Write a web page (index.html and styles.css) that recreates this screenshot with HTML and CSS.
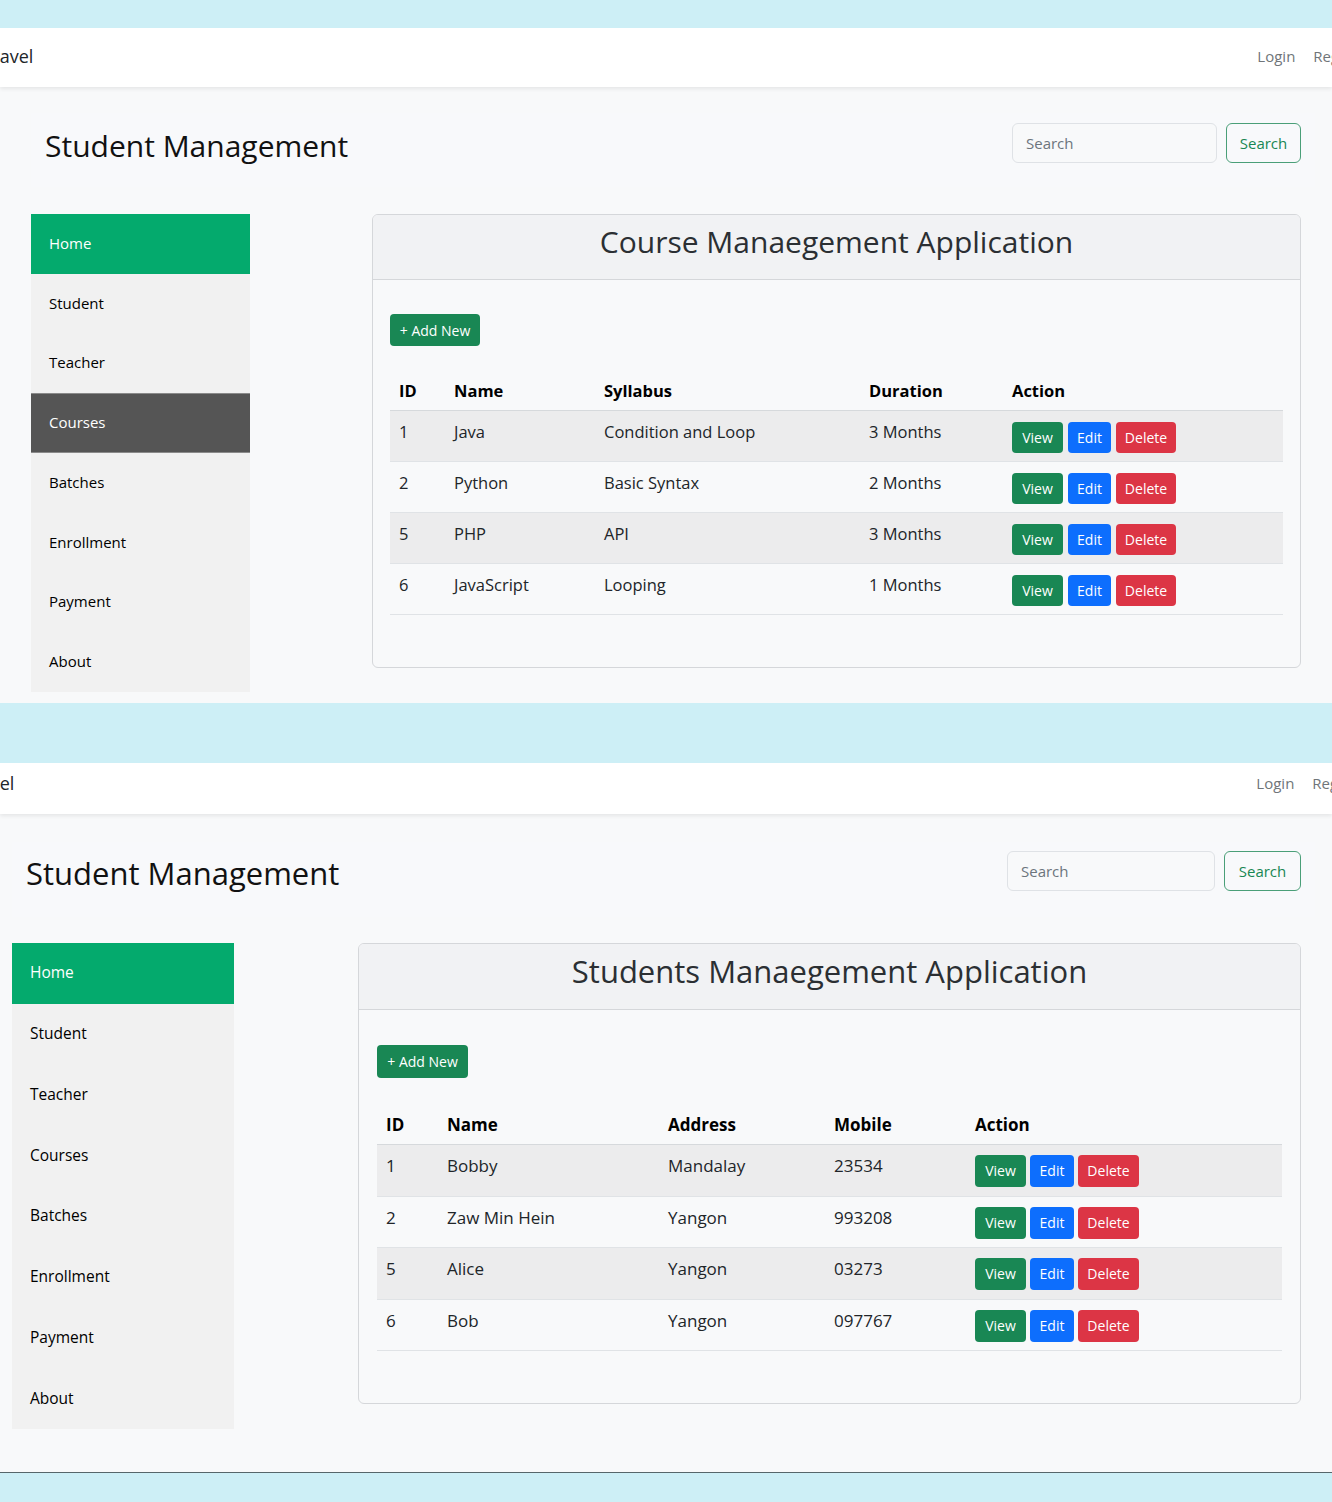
FILE: index.html
```html
<!DOCTYPE html>
<html lang="en">
<head>
<meta charset="utf-8">
<title>Student Management</title>
<link rel="stylesheet" href="styles.css">
</head>
<body>
<div class="gap gap-top"></div>

<section class="shot shot-a">
  <nav class="navbar">
    <span class="brand">Laravel</span>
    <div class="nav-links"><a href="#">Login</a><a href="#">Register</a></div>
  </nav>
  <div class="content">
    <header class="page-head">
      <h1 class="app-title">Student Management</h1>
      <form class="search">
        <input class="search-input" type="text" placeholder="Search">
        <button class="btn-outline" type="button">Search</button>
      </form>
    </header>
    <div class="main">
      <aside class="sidebar">
        <a class="side-link is-green" href="#">Home</a>
        <a class="side-link" href="#">Student</a>
        <a class="side-link" href="#">Teacher</a>
        <a class="side-link is-dark" href="#">Courses</a>
        <a class="side-link" href="#">Batches</a>
        <a class="side-link" href="#">Enrollment</a>
        <a class="side-link" href="#">Payment</a>
        <a class="side-link" href="#">About</a>
      </aside>
      <div class="card">
        <div class="card-header"><h2>Course Manaegement Application</h2></div>
        <div class="card-body">
          <a class="btn btn-success btn-add" href="#">+ Add New</a>
          <table class="table">
            <colgroup>
              <col class="c-a1"><col class="c-a2"><col class="c-a3"><col class="c-a4"><col>
            </colgroup>
            <thead>
              <tr><th>ID</th><th>Name</th><th>Syllabus</th><th>Duration</th><th>Action</th></tr>
            </thead>
            <tbody>
              <tr class="striped"><td>1</td><td>Java</td><td>Condition and Loop</td><td>3 Months</td><td><div class="actions"><a class="btn btn-success">View</a><a class="btn btn-primary">Edit</a><a class="btn btn-danger">Delete</a></div></td></tr>
              <tr><td>2</td><td>Python</td><td>Basic Syntax</td><td>2 Months</td><td><div class="actions"><a class="btn btn-success">View</a><a class="btn btn-primary">Edit</a><a class="btn btn-danger">Delete</a></div></td></tr>
              <tr class="striped"><td>5</td><td>PHP</td><td>API</td><td>3 Months</td><td><div class="actions"><a class="btn btn-success">View</a><a class="btn btn-primary">Edit</a><a class="btn btn-danger">Delete</a></div></td></tr>
              <tr><td>6</td><td>JavaScript</td><td>Looping</td><td>1 Months</td><td><div class="actions"><a class="btn btn-success">View</a><a class="btn btn-primary">Edit</a><a class="btn btn-danger">Delete</a></div></td></tr>
            </tbody>
          </table>
        </div>
      </div>
    </div>
  </div>
</section>

<div class="gap gap-mid"></div>

<section class="shot shot-b">
  <nav class="navbar">
    <span class="brand">Laravel</span>
    <div class="nav-links"><a href="#">Login</a><a href="#">Register</a></div>
  </nav>
  <div class="content">
    <header class="page-head">
      <h1 class="app-title">Student Management</h1>
      <form class="search">
        <input class="search-input" type="text" placeholder="Search">
        <button class="btn-outline" type="button">Search</button>
      </form>
    </header>
    <div class="main">
      <aside class="sidebar">
        <a class="side-link is-green" href="#">Home</a>
        <a class="side-link" href="#">Student</a>
        <a class="side-link" href="#">Teacher</a>
        <a class="side-link" href="#">Courses</a>
        <a class="side-link" href="#">Batches</a>
        <a class="side-link" href="#">Enrollment</a>
        <a class="side-link" href="#">Payment</a>
        <a class="side-link" href="#">About</a>
      </aside>
      <div class="card">
        <div class="card-header"><h2>Students Manaegement Application</h2></div>
        <div class="card-body">
          <a class="btn btn-success btn-add" href="#">+ Add New</a>
          <table class="table">
            <colgroup>
              <col class="c-b1"><col class="c-b2"><col class="c-b3"><col class="c-b4"><col>
            </colgroup>
            <thead>
              <tr><th>ID</th><th>Name</th><th>Address</th><th>Mobile</th><th>Action</th></tr>
            </thead>
            <tbody>
              <tr class="striped"><td>1</td><td>Bobby</td><td>Mandalay</td><td>23534</td><td><div class="actions"><a class="btn btn-success">View</a><a class="btn btn-primary">Edit</a><a class="btn btn-danger">Delete</a></div></td></tr>
              <tr><td>2</td><td>Zaw Min Hein</td><td>Yangon</td><td>993208</td><td><div class="actions"><a class="btn btn-success">View</a><a class="btn btn-primary">Edit</a><a class="btn btn-danger">Delete</a></div></td></tr>
              <tr class="striped"><td>5</td><td>Alice</td><td>Yangon</td><td>03273</td><td><div class="actions"><a class="btn btn-success">View</a><a class="btn btn-primary">Edit</a><a class="btn btn-danger">Delete</a></div></td></tr>
              <tr><td>6</td><td>Bob</td><td>Yangon</td><td>097767</td><td><div class="actions"><a class="btn btn-success">View</a><a class="btn btn-primary">Edit</a><a class="btn btn-danger">Delete</a></div></td></tr>
            </tbody>
          </table>
        </div>
      </div>
    </div>
  </div>
</section>

<div class="gap gap-bottom"></div>
</body>
</html>
```

FILE: styles.css
```css
* { box-sizing: border-box; }

html, body {
  margin: 0;
  padding: 0;
  width: 1332px;
  height: 1502px;
  overflow: hidden;
  background: #cdeff6;
  font-family: "Open Sans", "Noto Sans", "Liberation Sans", sans-serif;
  color: #212529;
}

a { text-decoration: none; color: inherit; }

.gap { background: #cdeff6; }
.gap-top { height: 28px; }
.gap-mid { height: 60px; }
.gap-bottom { height: 29px; }

.shot {
  background: #f8f9fa;
  overflow: hidden;
}

/* navbar */
.navbar {
  height: 59px;
  padding-bottom: 4px;
  background: #fff;
  display: flex;
  align-items: center;
  justify-content: space-between;
  box-shadow: 0 2px 4px rgba(0, 0, 0, 0.08);
  position: relative;
  z-index: 1;
}

.brand {
  font-size: 18px;
  color: #212529;
  margin-left: -27px;
}

.nav-links {
  display: flex;
  gap: 18px;
  margin-right: -38px;
  font-size: 15px;
  color: #707579;
}

.shot-b .navbar { height: 51px; padding-bottom: 12px; }
.shot-b .brand { margin-left: -46px; }
.shot-b .nav-links { margin-right: -37px; }

/* content */
.content { padding-bottom: 11px; }
.shot-b .content { padding-bottom: 43px; border-bottom: 1px solid #56666a; }

.page-head {
  margin: 26px 17px 0 31px;
  height: 74px;
  padding: 0 14px;
  display: flex;
  align-items: center;
  justify-content: space-between;
  background: #f8f9fb;
}

.shot-b .page-head {
  margin: 28px 17px 0 12px;
  height: 75px;
}

.app-title {
  margin: 0;
  font-weight: 400;
  font-size: 30px;
  color: #111;
  padding-bottom: 10px;
}

.shot-b .app-title { font-size: 31px; padding-bottom: 14px; }

.search {
  display: flex;
  gap: 9px;
  margin: 0;
  padding-bottom: 14px;
}

.search-input {
  width: 205px;
  height: 40px;
  border: 1px solid #dfe2e6;
  border-radius: 6px;
  background: #f8f9fa;
  padding: 0 13px;
  font-family: inherit;
  font-size: 15px;
  color: #212529;
}

.search-input::placeholder { color: #6c757d; }

.btn-outline {
  height: 40px;
  width: 75px;
  border: 1px solid #4a9f78;
  border-radius: 6px;
  background: transparent;
  color: #198754;
  font-family: inherit;
  font-size: 15px;
  padding: 0;
}

.shot-b .search-input { width: 208px; }
.shot-b .btn-outline { width: 77px; }
.shot-b .search { padding-bottom: 17px; }

/* main row */
.main {
  display: flex;
  align-items: flex-start;
  margin-top: 27px;
  padding-left: 31px;
}

.shot-b .main {
  margin-top: 26px;
  padding-left: 12px;
}

.sidebar {
  width: 219px;
  background: #f1f1f1;
  display: flex;
  flex-direction: column;
}

.shot-b .sidebar { width: 222px; }

.side-link {
  height: 59.75px;
  display: flex;
  align-items: center;
  padding: 0 18px 2px;
  font-size: 15px;
  color: #000;
}

.shot-b .side-link { height: 60.75px; font-size: 15.5px; }

.side-link.is-green { background: #04aa6d; color: #fff; }
.side-link.is-dark {
  background: #555;
  color: #fff;
  border-top: 1px solid #8a8a8a;
  border-bottom: 1px solid #8a8a8a;
}

/* card */
.card {
  margin-left: 122px;
  width: 929px;
  border: 1px solid #d5d7da;
  border-radius: 6px;
  background: #f8f9fa;
  overflow: hidden;
}

.shot-b .card {
  margin-left: 124px;
  width: 943px;
}

.card-header {
  height: 65px;
  background: #f1f2f4;
  border-bottom: 1px solid #d5d7da;
  display: flex;
  align-items: center;
  justify-content: center;
}

.shot-b .card-header { height: 66px; }

.card-header h2 {
  margin: 0;
  font-weight: 400;
  font-size: 30px;
  color: #2b2f33;
  padding-bottom: 12px;
}

.shot-b .card-header h2 { font-size: 31px; padding-bottom: 12px; }

.card-body {
  padding: 34px 17px 52px;
}

.shot-b .card-body { padding: 35px 18px 52px; }

/* buttons */
.btn {
  display: inline-flex;
  align-items: center;
  justify-content: center;
  height: 31px;
  padding: 0 9px;
  border-radius: 4px;
  font-size: 14px;
  color: #fff;
  cursor: pointer;
}

.btn-success { background: #198754; }
.btn-primary { background: #0d6efd; }
.btn-danger { background: #dc3545; }

.btn-add {
  height: 32px;
  width: 90px;
  padding: 0;
  font-size: 14px;
  margin-bottom: 26px;
}

.shot-b .btn-add { height: 33px; width: 91px; margin-bottom: 27px; }

.actions {
  display: flex;
  gap: 5px;
  margin-top: 3px;
}

.actions .btn-success { width: 51px; }
.actions .btn-primary { width: 43px; }
.actions .btn-danger { width: 60px; }

.shot-b .actions { gap: 4px; margin-top: 2px; }
.shot-b .actions .btn { height: 32px; }
.shot-b .actions .btn-primary { width: 44px; }
.shot-b .actions .btn-danger { width: 61px; }

/* table */
.table {
  width: 100%;
  border-collapse: collapse;
  font-size: 16.5px;
  color: #212529;
}

.shot-b .table { font-size: 17px; }

.table th {
  text-align: left;
  font-weight: 700;
  padding: 8px 9px;
  line-height: 22px;
  border-bottom: 1px solid #d6d9dc;
  color: #000;
}

.table td {
  padding: 8px 9px;
  line-height: 26px;
  vertical-align: top;
  border-bottom: 1px solid #e0e3e6;
}

.shot-b .table th { padding: 9px 9px 8px; }
.shot-b .table td { padding: 8px 9px 8.5px; }

.table tr.striped td { background: #ececed; }

.c-a1 { width: 55px; }
.c-a2 { width: 150px; }
.c-a3 { width: 265px; }
.c-a4 { width: 143px; }

.c-b1 { width: 61px; }
.c-b2 { width: 221px; }
.c-b3 { width: 166px; }
.c-b4 { width: 141px; }
```
